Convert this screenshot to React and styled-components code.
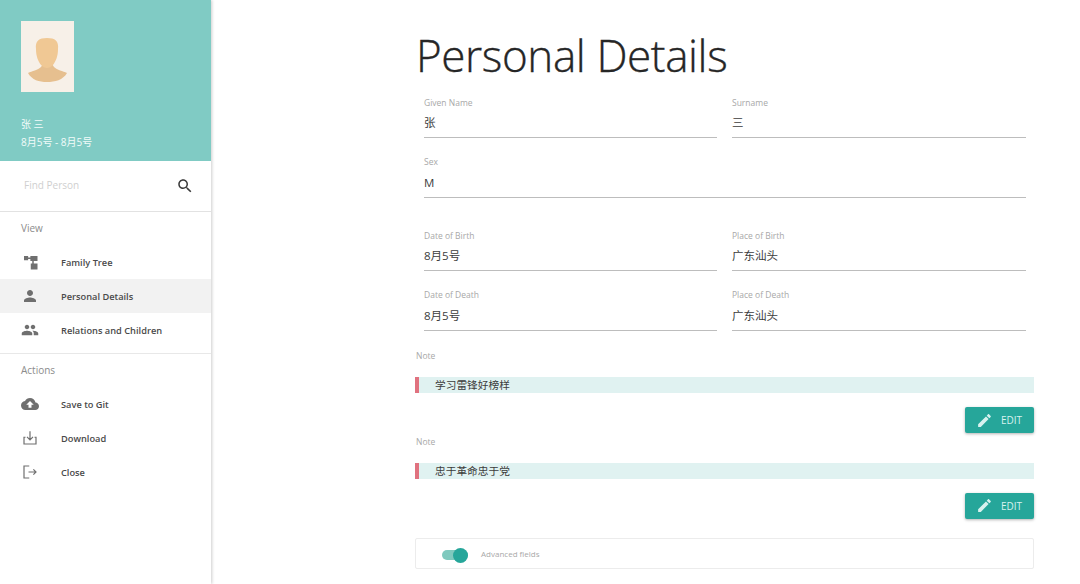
import React from "react";
import styled, { createGlobalStyle } from "styled-components";

const Global = createGlobalStyle`
  html, body { margin: 0; padding: 0; background: #fff; height: 100%; overflow: hidden; }
  * { box-sizing: border-box; }
  body { font-family: "Open Sans", "Noto Sans CJK SC", sans-serif; }
`;
const Page = styled.div`display: flex; width: 1080px; height: 584px; overflow: hidden;`;
const Sidebar = styled.aside`
  width: 211px; flex: none; height: 584px; background: #fff;
  box-shadow: 1px 0 3px rgba(0,0,0,.2); display: flex; flex-direction: column;
`;
const Header = styled.div`
  height: 161px; background: #80cbc4; padding: 21px 21px 0; color: #fff; flex: none;
`;
const Avatar = styled.svg`display: block; width: 53px; height: 71px;`;
const Name = styled.div`margin-top: 24px; font-size: 10px; line-height: 16px; color: #f2fbfa;`;
const Dates = styled.div`font-size: 10px; line-height: 18px; margin-top: 1px; color: #f2fbfa;`;
const Search = styled.div`
  height: 51px; flex: none; display: flex; align-items: center; justify-content: space-between;
  padding: 0 17px 0 24px; border-bottom: 1px solid #e2e2e2;
`;
const Placeholder = styled.span`font-size: 10px; color: #cfcfcf; margin-top: -3px;`;
const Section = styled.section`
  padding: 7px 0 ${p => p.$bottom || 0}px;
  border-bottom: ${p => p.$line ? "1px solid #e8e8e8" : "none"};
`;
const SectionTitle = styled.div`
  font-size: 10px; line-height: 18px; color: #8c8c8c; padding-left: 21px; margin-bottom: 8px;
`;
const Item = styled.div`
  height: 34px; display: flex; align-items: center; padding-left: 21px;
  background: ${p => p.$active ? "#f2f2f2" : "transparent"};
`;
const IconBox = styled.span`
  width: 40px; flex: none; display: flex; align-items: center; color: #6f6f6f;
  svg { display: block; width: 18px; height: 18px; }
`;
const ItemLabel = styled.span`font-size: 9.25px; font-weight: 600; color: #4a4a4a; white-space: nowrap;`;

const Main = styled.main`width: 619px; margin-left: 204px; flex: none;`;
const Title = styled.h1`
  margin: 0; padding: 25px 0 0 1px; height: 94px; font-size: 44px; line-height: 60px;
  font-weight: 300; color: #262626; letter-spacing: -.4px; white-space: nowrap;
  -webkit-text-stroke: .35px #262626;
`;
const Grid = styled.div`
  display: grid; grid-template-columns: 293px 294px; column-gap: 15px;
  padding-left: 9px; margin-bottom: ${p => p.$mb || 0}px;
`;
const Field = styled.div`grid-column: ${p => p.$wide ? "1 / -1" : "auto"}; height: 59.5px; padding-top: 1.5px;`;
const FieldLabel = styled.div`font-size: 8.5px; line-height: 13px; color: #a8a8a8;`;
const FieldValue = styled.div`
  font-size: 11.5px; line-height: 20px; color: #3c3c3c; padding-top: 4.5px; height: 29.5px;
  border-bottom: 1px solid #bdbdbd; width: 100%;
`;
const NoteLabel = styled.div`font-size: 8.5px; line-height: 13px; color: #a8a8a8; margin-bottom: 15px; padding-left: 1px;`;
const NoteBar = styled.div`
  height: 16px; background: #e0f2f1; border-left: 4px solid #e0727f; padding-left: 16px;
  font-size: 10.7px; line-height: 16px; color: #3c3c3c;
`;
const NoteActions = styled.div`display: flex; justify-content: flex-end; margin-top: 14px; margin-bottom: 1.5px;`;
const EditButton = styled.button`
  width: 69px; height: 26px; border: 0; border-radius: 2px; background: #26a69a; color: #d8f2ef;
  font-family: inherit; font-size: 10px; display: flex; align-items: center; padding: 0 0 0 11px; gap: 8px;
  box-shadow: 0 1px 3px rgba(0,0,0,.3);
  svg { width: 17px; height: 17px; flex: none; }
`;
const Advanced = styled.div`
  margin-top: 19px; height: 31px; border: 1px solid #ececec; border-radius: 2px;
  display: flex; align-items: center; padding-left: 26px;
`;
const Toggle = styled.span`
  position: relative; display: block; width: 26px; height: 10px; border-radius: 5px; background: #7fc9be; flex: none; margin-top: 4px;
  &::after { content: ""; position: absolute; right: 0; top: -2.5px; width: 15px; height: 15px; border-radius: 50%; background: #26a69a; }
`;
const ToggleLabel = styled.span`font-size: 8px; color: #a8a8a8; margin-left: 13px;`;

const Pic = () => (
  <Avatar viewBox="0 0 53 71">
    <rect width="53" height="71" fill="#f7f0e8" />
    <path d="M7 52c4-2 10-3 13-6l2-3h9l2 3c3 3 9 4 13 6-4 7-12 9-20 9s-15-2-19-9z" fill="#e6bf8f" />
    <path d="M15 28c-1-8 3-11 11-11s12 3 11 11c0 7-2 12-5 16-2 2-4 3-6 3s-4-1-6-3c-3-4-5-9-5-16z" fill="#f0c894" />
  </Avatar>
);
const P = ({ d, stroke }) => (
  <svg viewBox="0 0 24 24" fill={stroke ? "none" : "currentColor"} stroke={stroke ? "currentColor" : "none"} strokeWidth={stroke ? 1.6 : 0}>
    <path d={d} />
  </svg>
);
const icons = {
  tree: "M4 4h5.500v5.500H4zM9.500 6h3V4H22v6.500h-9.500V8h-3zM15 10.500h2V14h5v8h-9v-8h2z",
  person: "M12 12c2.210 0 4-1.790 4-4s-1.790-4-4-4-4 1.790-4 4 1.790 4 4 4zm0 2c-2.670 0-8 1.340-8 4v2h16v-2c0-2.660-5.330-4-8-4z",
  people: "M16 11c1.660 0 2.990-1.340 2.990-3S17.660 5 16 5s-3 1.340-3 3 1.340 3 3 3zm-8 0c1.660 0 2.990-1.340 2.990-3S9.660 5 8 5 5 6.340 5 8s1.340 3 3 3zm0 2c-2.330 0-7 1.170-7 3.500V19h14v-2.500c0-2.330-4.670-3.500-7-3.500zm8 0c-.290 0-.620.020-.970.050 1.160.840 1.970 1.970 1.970 3.450V19h6v-2.500c0-2.330-4.670-3.500-7-3.500z",
  cloud: "M19.350 10.040C18.670 6.590 15.640 4 12 4 9.110 4 6.600 5.640 5.350 8.040 2.340 8.360 0 10.910 0 14c0 3.310 2.690 6 6 6h13c2.760 0 5-2.240 5-5 0-2.640-2.050-4.780-4.650-4.960zM14 13v4h-4v-4H7l5-5 5 5h-3z",
  download: "M12 3v11M8 10.500l4 4 4-4M6 11H4v9h16v-9h-2",
  close: "M11 4H4v16h7M10 12h10M16.500 8.500 20 12l-3.500 3.500",
  search: "M15.500 14h-.790l-.280-.270C15.410 12.590 16 11.110 16 9.500 16 5.910 13.090 3 9.500 3S3 5.910 3 9.500 5.910 16 9.500 16c1.610 0 3.090-.590 4.230-1.570l.270.280v.790l5 4.990L20.490 19l-4.990-5zm-6 0C7.010 14 5 11.990 5 9.500S7.010 5 9.500 5 14 7.010 14 9.500 11.990 14 9.500 14z",
  pencil: "M3 17.250V21h3.750L17.810 9.940l-3.750-3.750L3 17.250zM20.710 7.040c.390-.390.390-1.020 0-1.410l-2.340-2.340c-.390-.390-1.020-.390-1.410 0l-1.830 1.830 3.750 3.750 1.830-1.830z",
};
const NavItem = ({ icon, stroke, active, children }) => (
  <Item $active={active}>
    <IconBox><P d={icons[icon]} stroke={stroke} /></IconBox>
    <ItemLabel>{children}</ItemLabel>
  </Item>
);
const F = ({ label, value, wide }) => (
  <Field $wide={wide}><FieldLabel>{label}</FieldLabel><FieldValue>{value}</FieldValue></Field>
);
const Note = ({ children }) => (
  <div>
    <NoteLabel>Note</NoteLabel>
    <NoteBar>{children}</NoteBar>
    <NoteActions>
      <EditButton><svg viewBox="0 0 24 24" fill="currentColor"><path d={icons.pencil} /></svg>EDIT</EditButton>
    </NoteActions>
  </div>
);

export default function App() {
  return (
    <Page>
      <Global />
      <Sidebar>
        <Header>
          <Pic />
          <Name>张 三</Name>
          <Dates>8月5号 - 8月5号</Dates>
        </Header>
        <Search>
          <Placeholder>Find Person</Placeholder>
          <svg width="18" height="18" viewBox="0 0 24 24" fill="#3a3a3a"><path d={icons.search} /></svg>
        </Search>
        <Section $line $bottom={6}>
          <SectionTitle>View</SectionTitle>
          <NavItem icon="tree">Family Tree</NavItem>
          <NavItem icon="person" active>Personal Details</NavItem>
          <NavItem icon="people">Relations and Children</NavItem>
        </Section>
        <Section>
          <SectionTitle>Actions</SectionTitle>
          <NavItem icon="cloud">Save to Git</NavItem>
          <NavItem icon="download" stroke>Download</NavItem>
          <NavItem icon="close" stroke>Close</NavItem>
        </Section>
      </Sidebar>
      <Main>
        <Title>Personal Details</Title>
        <Grid $mb={14}>
          <F label="Given Name" value="张" />
          <F label="Surname" value="三" />
          <F label="Sex" value="M" wide />
        </Grid>
        <Grid $mb={3}>
          <F label="Date of Birth" value="8月5号" />
          <F label="Place of Birth" value="广东汕头" />
          <F label="Date of Death" value="8月5号" />
          <F label="Place of Death" value="广东汕头" />
        </Grid>
        <Note>学习雷锋好榜样</Note>
        <Note>忠于革命忠于党</Note>
        <Advanced><Toggle /><ToggleLabel>Advanced fields</ToggleLabel></Advanced>
      </Main>
    </Page>
  );
}
